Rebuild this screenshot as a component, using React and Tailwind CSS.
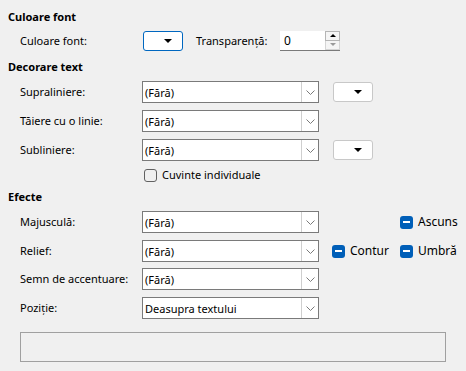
import React from 'react';

const Combo = ({ value }) => (
  <div className="w-[177px] h-[22px] flex-none bg-white border border-[#7a7a7a] flex items-center">
    <span className="flex-1 pl-[2px] leading-none">{value}</span>
    <div className="w-[17px] h-[20px] border-l border-[#cfcfcf] flex items-center justify-center">
      <svg width="9" height="5" viewBox="0 0 9 5"><path d="M0.5 0.5 L4.5 4.5 L8.5 0.5" fill="none" stroke="#7a7a7a" strokeWidth="1" /></svg>
    </div>
  </div>
);

const ColorBtn = ({ focused }) => (
  <div className={`w-[40px] h-[20px] flex-none bg-white rounded-[3px] border flex items-center justify-end pr-[10px] ${focused ? 'border-[#0067c0]' : 'border-[#c8c8c8]'}`}>
    <svg width="8" height="4" viewBox="0 0 8 4"><path d="M0 0 H8 L4 4 Z" fill="#000" /></svg>
  </div>
);

const Tri = ({ label, className = '' }) => (
  <div className={`flex flex-none items-center gap-[5px] ${className}`}>
    <div className="w-[13px] h-[13px] rounded-[3px] bg-[#005fb8] flex items-center justify-center">
      <div className="w-[7px] h-[1.5px] bg-white" />
    </div>
    <span className="text-[12px]">{label}</span>
  </div>
);

const Row = ({ label, value, children, className = 'mt-[7px]' }) => (
  <div className={`h-[22px] flex items-center ${className}`}>
    <span className="w-[142px] flex-none pl-5 whitespace-nowrap">{label}</span>
    <Combo value={value} />
    {children}
  </div>
);

export default function App() {
  return (
    <div className="w-[466px] h-[371px] bg-[#f0f0f0] text-[11px] text-black pt-[9px] overflow-hidden" style={{ fontFamily: '"Segoe UI", "Noto Sans", sans-serif' }}>
      <div className="h-4 leading-4 pl-2 font-bold">Culoare font</div>
      <div className="mt-[6px] h-5 flex items-center">
        <span className="w-[143px] flex-none pl-5">Culoare font:</span>
        <ColorBtn focused />
        <span className="ml-[13px] w-[84px] flex-none">Transparență:</span>
        <div className="w-[60px] h-5 bg-white border-b border-[#7a7a7a] flex">
          <span className="flex-1 pl-[4px] leading-5 text-[12px]">0</span>
          <div className="w-[15px] flex flex-col">
            <div className="h-[10px] border border-[#b5b5b5] bg-[#f5f5f5] flex items-center justify-center">
              <svg width="6" height="3" viewBox="0 0 6 3"><path d="M0 3 H6 L3 0 Z" fill="#000" /></svg>
            </div>
            <div className="h-[10px] border border-t-0 border-[#d5d5d5] bg-[#f5f5f5] flex items-center justify-center">
              <svg width="6" height="3" viewBox="0 0 6 3"><path d="M0 0 H6 L3 3 Z" fill="#9a9a9a" /></svg>
            </div>
          </div>
        </div>
      </div>

      <div className="mt-2 h-4 leading-4 pl-2 font-bold">Decorare text</div>
      <Row label="Supraliniere:" value="(Fără)" className="mt-[6px]">
        <div className="ml-[14px]"><ColorBtn /></div>
      </Row>
      <Row label="Tăiere cu o linie:" value="(Fără)" />
      <Row label="Subliniere:" value="(Fără)">
        <div className="ml-[14px]"><ColorBtn /></div>
      </Row>
      <div className="mt-[6px] h-4 flex items-center pl-[144px] gap-[5px]">
        <div className="w-[13px] h-[13px] rounded-[3px] border border-[#616161]" />
        <span>Cuvinte individuale</span>
      </div>

      <div className="mt-[6px] h-4 leading-4 pl-2 font-bold">Efecte</div>
      <Row label="Majusculă:" value="(Fără)" className="mt-[6px]">
        <Tri label="Ascuns" className="ml-[81px]" />
      </Row>
      <Row label="Relief:" value="(Fără)">
        <Tri label="Contur" className="ml-[13px] w-[68px]" />
        <Tri label="Umbră" />
      </Row>
      <Row label="Semn de accentuare:" value="(Fără)" className="mt-[6px]" />
      <Row label="Poziție:" value="Deasupra textului" />
      <div className="mt-[13px] mx-5 h-[30px] border border-[#a0a0a0]" />
    </div>
  );
}
